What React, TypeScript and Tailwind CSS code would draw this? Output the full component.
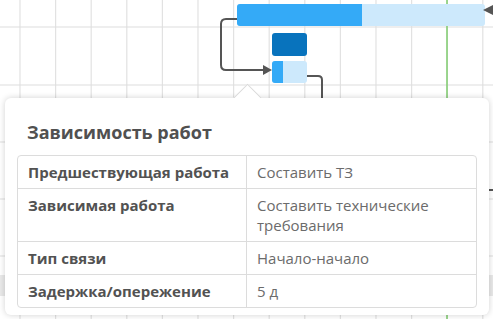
import React from "react";

const gridXs = Array.from({ length: 14 }, (_, k) => 20 + 35.6 * k);
const gridYs = [27, 85, 142, 199, 256];

function GanttBackground() {
  return (
    <svg width="493" height="319" viewBox="0 0 493 319" className="block">
      {gridXs.map((x) => (
        <line key={"v" + x} x1={x} y1={0} x2={x} y2={319} stroke="#e2e2e2" strokeWidth={1.2} />
      ))}
      {gridYs.map((y) => (
        <line key={"h" + y} x1={0} y1={y} x2={493} y2={y} stroke="#dedede" strokeWidth={1.2} />
      ))}
      <rect x={0} y={275} width={493} height={21} fill="#e9e9e9" />
      <line x1={447} y1={0} x2={447} y2={319} stroke="#7fcd6e" strokeWidth={1.5} />
      {/* top bar */}
      <rect x={237} y={4} width={248} height={22} rx={3} fill="#cde9fc" />
      <path d="M240 4 H362 V26 H240 Q237 26 237 23 V7 Q237 4 240 4 Z" fill="#34aaf7" />
      <polygon points="483,10 493,5 493,15" fill="#555" />
      {/* dark box */}
      <rect x={272} y={33} width={35} height={23} rx={3} fill="#0873bd" />
      {/* small bar */}
      <rect x={272} y={61} width={35} height={22} rx={3} fill="#cde9fc" />
      <path d="M275 61 H283 V83 H275 Q272 83 272 80 V64 Q272 61 275 61 Z" fill="#34aaf7" />
      {/* connectors */}
      <path d="M237 19 H226 Q221 19 221 24 V65 Q221 70 226 70 H265" fill="none" stroke="#555" strokeWidth={2} />
      <polygon points="263,65 272,70 263,75" fill="#555" />
      <path d="M307 76 H318 Q322 76 322 80 V120" fill="none" stroke="#555" strokeWidth={2} />
      <line x1={489} y1={190} x2={493} y2={190} stroke="#555" strokeWidth={2} />
    </svg>
  );
}

const rows: { label: string; value: string }[] = [
  { label: "Предшествующая работа", value: "Составить ТЗ" },
  { label: "Зависимая работа", value: "Составить технические требования" },
  { label: "Тип связи", value: "Начало-начало" },
  { label: "Задержка/опережение", value: "5 д" },
];

export default function App() {
  return (
    <div
      className="relative w-[493px] h-[319px] overflow-hidden bg-white"
      style={{ fontFamily: '"Open Sans", "Noto Sans", sans-serif' }}
    >
      <GanttBackground />
      <div className="absolute left-[5px] top-[98px] w-[484px] h-[217px] rounded-[6px] bg-white px-3 pt-[22px] shadow-[0_0_6px_rgba(0,0,0,0.18)]">
        <div className="absolute left-[227px] top-[-15px] w-[30px] h-[15px] overflow-hidden">
          <div className="absolute left-[4.5px] top-[4.5px] w-[21px] h-[21px] rotate-45 bg-white border border-[#d9d9d9]" />
        </div>
        <div className="pl-[10px] text-[18px] leading-[24px] font-bold text-[#505050]">Зависимость работ</div>
        <div className="mt-[11px] rounded-[4px] border border-[#dcdcdc] text-[15px] leading-[20px]">
          {rows.map((r, i) => (
            <div key={r.label} className={"grid grid-cols-[229px_1fr]" + (i > 0 ? " border-t border-[#dcdcdc]" : "")}>
              <div className="pl-[10px] pr-2 py-[6px] font-bold text-[#525252] border-r border-[#dcdcdc] whitespace-nowrap">{r.label}</div>
              <div className="pl-[10px] pr-10 py-[6px] text-[#6b6b6b]">{r.value}</div>
            </div>
          ))}
        </div>
      </div>
    </div>
  );
}
